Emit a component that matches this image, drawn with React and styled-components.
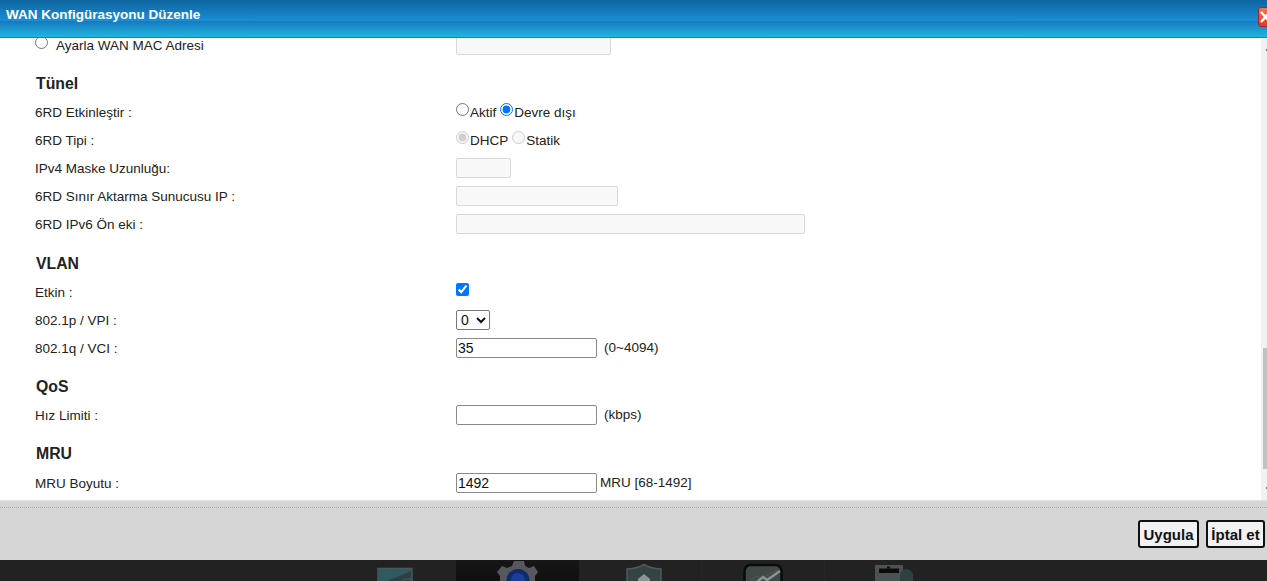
import React from "react";
import styled, { createGlobalStyle } from "styled-components";

const Global = createGlobalStyle`
  html, body {
    margin: 0;
    padding: 0;
    height: 100%;
    overflow: hidden;
    background: #fff;
  }
  body {
    font-family: "Liberation Sans", Arial, sans-serif;
    font-size: 13.5px;
    color: #222;
  }
`;

const Page = styled.div`
  width: 1267px;
  height: 581px;
  display: flex;
  flex-direction: column;
  overflow: hidden;
`;

const Header = styled.div`
  position: relative;
  flex: 0 0 38px;
  box-sizing: border-box;
  border-bottom: 1px solid #1488a8;
  background: linear-gradient(to bottom, #0e659f 0, #1a8ed6 21px, #1679bf 21px, #1fb6de 37px);
  color: #fff;
  font-size: 13.5px;
  font-weight: bold;
  line-height: 30px;
  padding-left: 6px;
`;

const CloseButton = styled.div`
  position: absolute;
  left: 1258px;
  top: 7px;
  width: 20px;
  height: 20px;
  box-sizing: border-box;
  border: 1px solid #b3232f;
  border-radius: 3px;
  background: linear-gradient(to bottom, #f0785a, #dc3c1c);
  svg {
    display: block;
  }
`;

const Body = styled.div`
  flex: 0 0 462px;
  display: flex;
  overflow: hidden;
`;

const Content = styled.div`
  flex: 1;
  padding-left: 35px;
`;

const Row = styled.div`
  display: flex;
  align-items: center;
  height: ${(p) => p.$h || 28}px;
  line-height: 16px;
`;

const Label = styled.div`
  flex: 0 0 421px;
  padding-top: 1px;
  line-height: 14px;
`;

const MacLabel = styled(Label)`
  display: flex;
  align-items: center;
`;

const Value = styled.div`
  display: flex;
  align-items: center;
`;

const Heading = styled.div`
  font-size: 15.8px;
  font-weight: bold;
  color: #222;
  height: 20px;
  line-height: 20px;
  margin-top: ${(p) => p.$top}px;
  margin-bottom: ${(p) => p.$bottom}px;
  padding-left: 1px;
`;

const TextInput = styled.input`
  box-sizing: border-box;
  width: ${(p) => p.$w}px;
  height: 20px;
  margin: 0;
  padding: 1px 1px;
  font-family: "Liberation Sans", Arial, sans-serif;
  font-size: 14px;
  color: #111;
  border: 1px solid #8a8a8a;
  border-radius: 2px;
  background: #fff;
  &:disabled {
    border-color: #d8d8d8;
    background: #f8f8f8;
  }
`;

const Radio = styled.input.attrs({ type: "radio" })`
  margin: 0 1px 6px 0;
  width: 13px;
  height: 13px;
`;

const MacRadio = styled(Radio)`
  margin: 0 8px 6px 0;
`;

const Check = styled.input.attrs({ type: "checkbox" })`
  margin: 0 0 6px 0;
  width: 13px;
  height: 13px;
`;

const RadioText = styled.span`
  margin-right: 4px;
  padding-top: 2px;
`;

const Select = styled.select`
  width: 34px;
  height: 20px;
  font-family: "Liberation Sans", Arial, sans-serif;
  font-size: 14px;
  color: #111;
  background: #fff;
  border: 1px solid #777;
  border-radius: 2px;
`;

const Hint = styled.span`
  margin-left: ${(p) => p.$gap}px;
`;

const Scrollbar = styled.div`
  flex: 0 0 6px;
  position: relative;
  background: #f1f1f1;
`;

const Thumb = styled.div`
  position: absolute;
  left: 2px;
  right: 0;
  top: 310px;
  height: 121px;
  background: #c1c1c1;
`;

const ScrollTick = styled.div`
  position: absolute;
  right: 0;
  top: ${(p) => p.$top}px;
  width: 1px;
  height: 2px;
  background: #777;
`;

const Footer = styled.div`
  flex: 0 0 60px;
  box-sizing: border-box;
  background: #d6d6d6;
  border-top: 1px solid #e2e2e2;
  display: flex;
  flex-direction: column;
`;

const Dotted = styled.div`
  margin-top: 6px;
  border-top: 1px dotted #a8a8a8;
`;

const Actions = styled.div`
  display: flex;
  justify-content: flex-end;
  gap: 7px;
  padding: 12px 2px 0 0;
`;

const ActionButton = styled.button`
  box-sizing: border-box;
  height: 28px;
  padding: 0;
  width: ${(p) => p.$w}px;
  font-family: "Liberation Sans", Arial, sans-serif;
  font-size: 15px;
  font-weight: bold;
  color: #111;
  background: #f2f2f2;
  border: 2px solid #111;
  border-radius: 3px;
`;

const Dock = styled.div`
  flex: 1;
  background: #222;
  display: flex;
  padding-left: 333px;
  overflow: hidden;
`;

const DockTab = styled.div`
  flex: 0 0 123px;
  box-sizing: border-box;
  height: 21px;
  display: flex;
  justify-content: center;
  padding-left: ${(p) => p.$shift || 0}px;
  background: ${(p) => (p.$active ? "linear-gradient(to bottom, #161616, #101010)" : "transparent")};
  border-right: ${(p) => (p.$divider ? "1px solid #262626" : "0")};
  svg {
    display: block;
  }
`;

function RouterIcon() {
  return (
    <svg width="40" height="21" viewBox="0 0 40 21">
      <rect x="3" y="8.5" width="34" height="16" fill="#2d4144" stroke="#47575a" strokeWidth="1.5" />
      <path d="M4 9h32v2L12 21H4z" fill="#2f5a62" />
      <circle cx="33" cy="25" r="6" fill="#2b3537" stroke="#4a5557" strokeWidth="1.5" />
    </svg>
  );
}

function GearIcon() {
  return (
    <svg width="44" height="21" viewBox="0 0 44 21">
      <path d="M17 1h10l1 5 4 2 5-2 4 6-3 4v5H3v-5L0 12l5-6 5 2 5-2z" fill="#55585c" transform="translate(1 0)" />
      <circle cx="22" cy="20.5" r="11.5" fill="#122a6c" />
      <circle cx="22" cy="20" r="7" fill="#1a3f9a" />
    </svg>
  );
}

function ShieldIcon() {
  return (
    <svg width="40" height="21" viewBox="0 0 40 21">
      <path d="M20 4.5c5 3 9 4 17 4.5v14H3V9c8-.5 12-1.5 17-4.5z" fill="#344444" stroke="#4d5a5a" strokeWidth="1.5" />
      <path d="M20 14l6 5v4H14v-4z" fill="#8d9593" />
    </svg>
  );
}

function ChartIcon() {
  return (
    <svg width="44" height="21" viewBox="0 0 44 21">
      <rect x="3.5" y="5" width="37" height="22" rx="6" fill="#3f4a48" stroke="#0b0b0b" strokeWidth="2.5" />
      <path d="M9 21l7-5 4 3 16-9" fill="none" stroke="#505b59" strokeWidth="1" />
      <path d="M16 22l6-5 4 3 13-9" fill="none" stroke="#8c9492" strokeWidth="2.5" />
    </svg>
  );
}

function ToolIcon() {
  return (
    <svg width="40" height="21" viewBox="0 0 40 21">
      <rect x="1" y="5" width="28" height="18" fill="#4a5252" />
      <rect x="5" y="8.5" width="20" height="4.5" fill="#0c0c0c" />
      <rect x="13" y="6.5" width="3" height="2" fill="#0c0c0c" />
      <circle cx="32.5" cy="15.5" r="6.5" fill="#2f4040" />
      <rect x="26" y="15.5" width="13" height="6" fill="#2f4040" />
    </svg>
  );
}

export default function App() {
  return (
    <Page>
      <Global />
      <Header>
        WAN Konfigürasyonu Düzenle
        <CloseButton>
          <svg width="18" height="18" viewBox="0 0 18 18">
            <path d="M2 4l9 10M11 4L2 14" stroke="#fff" strokeWidth="2.4" fill="none" />
          </svg>
        </CloseButton>
      </Header>
      <Body>
        <Content>
          <Row $h={14}>
            <MacLabel>
              <MacRadio name="mac" />
              Ayarla WAN MAC Adresi
            </MacLabel>
            <Value>
              <TextInput disabled $w={155} />
            </Value>
          </Row>
          <Heading $top={22} $bottom={4}>Tünel</Heading>
          <Row>
            <Label>6RD Etkinleştir :</Label>
            <Value>
              <Radio name="sixrd" />
              <RadioText>Aktif</RadioText>
              <Radio name="sixrd" defaultChecked />
              <RadioText>Devre dışı</RadioText>
            </Value>
          </Row>
          <Row>
            <Label>6RD Tipi :</Label>
            <Value>
              <Radio name="kind" disabled defaultChecked />
              <RadioText>DHCP</RadioText>
              <Radio name="kind" disabled />
              <RadioText>Statik</RadioText>
            </Value>
          </Row>
          <Row>
            <Label>IPv4 Maske Uzunluğu:</Label>
            <Value>
              <TextInput disabled $w={55} />
            </Value>
          </Row>
          <Row>
            <Label>6RD Sınır Aktarma Sunucusu IP :</Label>
            <Value>
              <TextInput disabled $w={162} />
            </Value>
          </Row>
          <Row>
            <Label>6RD IPv6 Ön eki :</Label>
            <Value>
              <TextInput disabled $w={349} />
            </Value>
          </Row>
          <Heading $top={16} $bottom={4}>VLAN</Heading>
          <Row>
            <Label>Etkin :</Label>
            <Value>
              <Check defaultChecked />
            </Value>
          </Row>
          <Row>
            <Label>802.1p / VPI :</Label>
            <Value>
              <Select defaultValue="0">
                <option>0</option>
              </Select>
            </Value>
          </Row>
          <Row>
            <Label>802.1q / VCI :</Label>
            <Value>
              <TextInput $w={141} defaultValue="35" />
              <Hint $gap={7}>(0~4094)</Hint>
            </Value>
          </Row>
          <Heading $top={15} $bottom={4}>QoS</Heading>
          <Row>
            <Label>Hız Limiti :</Label>
            <Value>
              <TextInput $w={141} />
              <Hint $gap={7}>(kbps)</Hint>
            </Value>
          </Row>
          <Heading $top={15} $bottom={5}>MRU</Heading>
          <Row>
            <Label>MRU Boyutu :</Label>
            <Value>
              <TextInput $w={141} defaultValue="1492" />
              <Hint $gap={3}>MRU [68-1492]</Hint>
            </Value>
          </Row>
        </Content>
        <Scrollbar>
          <ScrollTick $top={11} />
          <Thumb />
          <ScrollTick $top={449} />
        </Scrollbar>
      </Body>
      <Footer>
        <Dotted />
        <Actions>
          <ActionButton $w={61}>Uygula</ActionButton>
          <ActionButton $w={59}>İptal et</ActionButton>
        </Actions>
      </Footer>
      <Dock>
        <DockTab><RouterIcon /></DockTab>
        <DockTab $active><GearIcon /></DockTab>
        <DockTab $shift={8} $divider><ShieldIcon /></DockTab>
        <DockTab $divider><ChartIcon /></DockTab>
        <DockTab $shift={14}><ToolIcon /></DockTab>
      </Dock>
    </Page>
  );
}
